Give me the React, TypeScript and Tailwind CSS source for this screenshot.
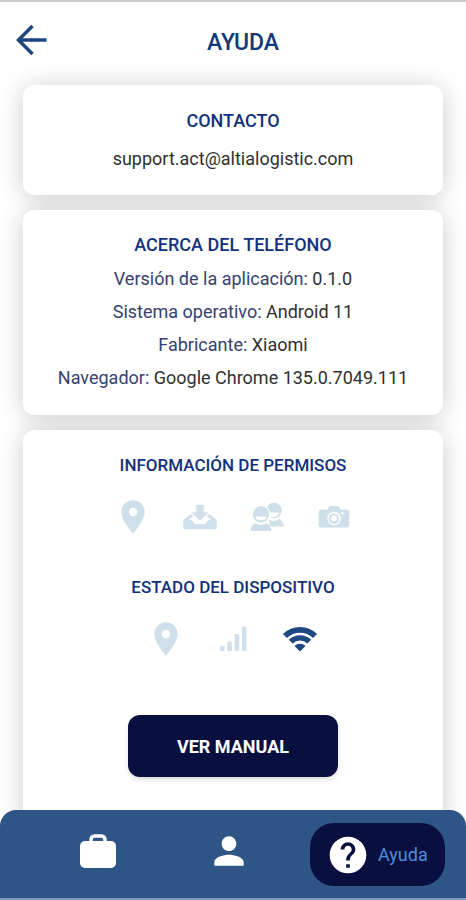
import type { ReactNode } from "react";
import { MdHelp, MdLocationOn, MdPerson } from "react-icons/md";

function Card({ children, className = "", grow = false }: { children: ReactNode; className?: string; grow?: boolean }) {
  return (
    <section className={`rounded-xl shadow-[0_2px_26px_rgba(0,0,0,0.20)] ${grow ? "flex flex-1 flex-col" : ""}`}>
      <div className={`relative z-10 flex flex-col items-center rounded-xl bg-white px-4 text-center ${grow ? "flex-1" : ""} ${className}`}>
        {children}
      </div>
    </section>
  );
}

function Title({ children, small = false }: { children: ReactNode; small?: boolean }) {
  return (
    <h2 className={`font-medium leading-[33px] text-[#12317c] ${small ? "text-[17px]" : "text-[18px]"}`}>{children}</h2>
  );
}

function InboxIcon() {
  return (
    <svg viewBox="0 0 40 40" className="size-10" fill="currentColor" aria-label="Almacenamiento" role="img">
      <path d="M16.300 8h7.400v7.500h5L20 23.500l-8.700-8h5z" />
      <path d="M10 17.500h1.800l1.700 1.600-4.700 3.700h2.700l3 4.200h11l3-4.200h2.700l-4.700-3.700 1.700-1.600H30l6.700 5.500v8a1.300 1.300 0 0 1-1.300 1.300H4.600A1.300 1.300 0 0 1 3.300 31v-8z" />
    </svg>
  );
}

function PeopleIcon() {
  return (
    <svg viewBox="0 0 40 40" className="size-10" fill="currentColor" aria-label="Contactos" role="img">
      <circle cx="27" cy="13.500" r="7.800" />
      <path d="M22 22.500c3 2 7 2 10.500-.5 2.500 1.500 3.700 4 4.200 7.500H23z" />
      <path d="M21 15.500h11c-.8 4.500-7 6-11 3z" fill="#fff" />
      <circle cx="14" cy="17.500" r="9.300" fill="#fff" />
      <path d="M2.500 35c0-5 2.500-8.500 5.500-9.500h12c3 1 5.500 4.500 5.500 9.500z" fill="#fff" />
      <circle cx="14" cy="17.500" r="8.200" />
      <path d="M8.300 19.700h11.400c-.8 4.800-10.600 4.800-11.400 0z" fill="#fff" />
      <path d="M3.500 34c.3-4 2-6.800 5-7.700 3.500 2 7.500 2 11 0 3 .9 4.700 3.700 5 7.700z" />
    </svg>
  );
}

function CameraIcon() {
  return (
    <svg viewBox="0 0 40 40" className="size-10" fill="currentColor" aria-label="Cámara" role="img">
      <path d="M7 12.500h6.500l1.500-2.500q.6-1 2-1h6q1.400 0 2 1l1.500 2.500H33a2.300 2.300 0 0 1 2.300 2.300v13.400a2.300 2.300 0 0 1-2.300 2.300H7a2.300 2.300 0 0 1-2.300-2.300V14.800A2.300 2.300 0 0 1 7 12.500z" />
      <circle cx="20" cy="21.500" r="6" fill="none" stroke="#fff" strokeWidth="1.500" />
      <circle cx="20" cy="21.500" r="2.900" fill="#fff" />
      <path d="M26.500 15.500h4v1.500h-4z" fill="#fff" />
    </svg>
  );
}

function SignalIcon() {
  return (
    <svg viewBox="0 0 40 40" className="size-10" fill="currentColor" aria-label="Cobertura" role="img">
      <rect x="7" y="27" width="4.500" height="5" rx="1" />
      <rect x="14.300" y="22.500" width="4.500" height="9.500" rx="1" />
      <rect x="21.700" y="15" width="4.500" height="17" rx="1" />
      <rect x="29" y="7.500" width="4.500" height="24.500" rx="1" />
    </svg>
  );
}

function WifiIcon() {
  return (
    <svg viewBox="0 0 40 40" className="size-10 text-[#1d4980]" fill="none" stroke="currentColor" aria-label="Wifi" role="img">
      <path d="M5 17a21.300 21.300 0 0 1 30 0" strokeWidth="5.800" />
      <path d="M10.700 22.700a13.200 13.200 0 0 1 18.600 0" strokeWidth="5.400" />
      <path d="M20 32.500l-5.500-5.500a7.800 7.800 0 0 1 11 0z" fill="currentColor" stroke="none" />
    </svg>
  );
}

const phone = [
  ["Versión de la aplicación:", "0.1.0"],
  ["Sistema operativo:", "Android 11"],
  ["Fabricante:", "Xiaomi"],
  ["Navegador:", "Google Chrome 135.0.7049.111"],
];

export default function App() {
  return (
    <div className="flex h-screen flex-col overflow-hidden border-t-2 border-[#cbcbcb] bg-white font-[Roboto,sans-serif]">
      <header className="grid h-[83px] shrink-0 grid-cols-[48px_1fr_28px] items-start pt-5">
        <button type="button" aria-label="Volver" className="pl-4 pt-[2px] text-[#1c4682]">
          <svg viewBox="0 0 32 32" className="size-8" fill="none" stroke="currentColor" strokeWidth="3.500">
            <path d="M30.500 16H2M16.500 2L2.500 16l14 14" />
          </svg>
        </button>
        <h1 className="text-center text-[23px] font-medium leading-[42px] text-[#12387e]">AYUDA</h1>
      </header>

      <main className="flex min-h-0 flex-1 flex-col gap-[15px] px-[23px]">
        <Card className="gap-[5px] pb-5 pt-[19px]">
          <Title>CONTACTO</Title>
          <p className="text-[18px] leading-[33px] text-[#303030]">support.act@altialogistic.com</p>
        </Card>

        <Card className="pb-[21px] pt-[18px]">
          <Title>ACERCA DEL TELÉFONO</Title>
          <div className="pt-px">
            {phone.map(([label, value]) => (
              <p key={label} className="text-[18px] leading-[33px] text-[#303030]">
                <span className="text-[#354270]">{label}</span> {value}
              </p>
            ))}
          </div>
        </Card>

        <Card grow className="pt-[19px]">
          <Title small>INFORMACIÓN DE PERMISOS</Title>
          <div className="mt-[15px] flex gap-[27px] text-[#cfe0ea]">
            <MdLocationOn size={40} aria-label="Ubicación" />
            <InboxIcon />
            <PeopleIcon />
            <CameraIcon />
          </div>
          <div className="mt-[34px]">
            <Title small>ESTADO DEL DISPOSITIVO</Title>
          </div>
          <div className="mt-[15px] flex gap-[27px] text-[#cfe0ea]">
            <MdLocationOn size={40} aria-label="Ubicación" />
            <SignalIcon />
            <WifiIcon />
          </div>
          <button
            type="button"
            className="mt-14 h-[62px] w-[210px] shrink-0 rounded-xl bg-[#09103f] text-[18px] font-bold text-white shadow-md"
          >
            VER MANUAL
          </button>
        </Card>
      </main>

      <nav className="relative z-20 -mt-4 flex h-[90px] shrink-0 items-start rounded-t-2xl border-b-2 border-[#7f9abb] bg-[#2f5486] pl-8 pr-[21px] pt-[13px]">
        <button type="button" aria-label="Trabajos" className="flex h-14 flex-1 items-center justify-center text-white">
          <svg viewBox="0 0 36 34" className="h-[34px] w-9" fill="currentColor">
            <rect x="0" y="7" width="36" height="27" rx="5" />
            <path d="M11 9V5.500a3.500 3.500 0 0 1 3.500-3.500h7A3.500 3.500 0 0 1 25 5.500V9" fill="none" stroke="currentColor" strokeWidth="3.500" />
          </svg>
        </button>
        <button type="button" aria-label="Perfil" className="flex h-14 flex-1 items-center justify-center text-white">
          <MdPerson size={44} />
        </button>
        <button
          type="button"
          className="ml-4 flex h-[63px] w-[135px] items-center gap-2 rounded-3xl bg-[#09103f] pl-4 text-[18px] text-[#4c8edb]"
        >
          <MdHelp size={44} className="text-white" />
          Ayuda
        </button>
      </nav>
    </div>
  );
}
